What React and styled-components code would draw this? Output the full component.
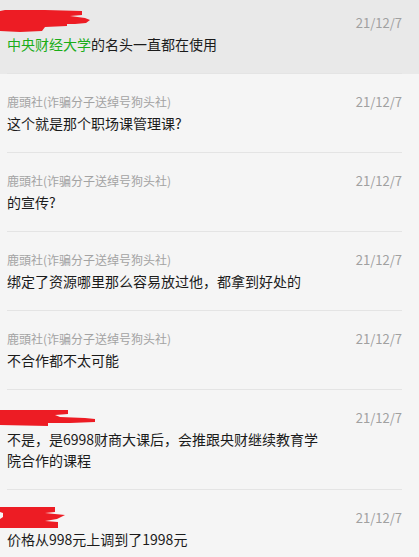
import React from "react";
import styled, { createGlobalStyle } from "styled-components";

const Global = createGlobalStyle`
  html, body {
    margin: 0;
    padding: 0;
    background: #f5f5f5;
    overflow: hidden;
  }
  body {
    font-family: "Noto Sans CJK SC", "Noto Sans", sans-serif;
  }
`;

const List = styled.div`
  display: flex;
  flex-direction: column;
  margin-top: -5px;
  width: 419px;
`;

const Item = styled.div`
  background: ${(p) => (p.$active ? "#e9e9e9" : "transparent")};
  padding: 0 17px 0 7px;
`;

const Inner = styled.div`
  padding: 18px 0 18px;
  border-bottom: 1px solid #e4e4e4;
  display: flex;
  flex-direction: column;
`;

const Head = styled.div`
  display: flex;
  align-items: center;
  justify-content: space-between;
  height: 20px;
`;

const Name = styled.span`
  font-size: 12px;
  color: #a3a3a3;
  line-height: 20px;
  white-space: nowrap;
`;

const DateText = styled.span`
  font-size: 13px;
  color: #a0a0a0;
  line-height: 20px;
`;

const Message = styled.div`
  margin-top: 1px;
  font-size: 14px;
  line-height: 21px;
  color: #1b1b1b;
  max-width: 322px;
`;

const Green = styled.span`
  color: #1aad19;
`;

const Scribble = styled.svg`
  display: block;
  width: 100px;
  height: 28px;
  margin: -4px 0 -4px -7px;
  flex-shrink: 0;
`;

const Redaction = ({ points }) => (
  <Scribble viewBox="0 0 100 28">
    <polygon points={points} fill="#ed1c24" />
  </Scribble>
);

const R1 =
  "0,2 5,1 45,1 82,2 82,6 70,7 85,9 90,11 86,14 75,15 67,15 67,17 45,18 42,22 20,23 0,22";
const R6 =
  "0,6 68,6 68,10 55,11 60,13 85,14 95,15 95,18 70,19 48,19 48,22 0,21";
const R7 =
  "0,3 55,3 55,8 45,9 65,11 57,15 45,17 58,18 58,24 0,24 0,15 3,13 3,9 0,8";

const NICK = "鹿頭社(诈骗分子送绰号狗头社)";

const items = [
  {
    active: true,
    red: R1,
    date: "21/12/7",
    msg: (
      <>
        <Green>中央财经大学</Green>的名头一直都在使用
      </>
    ),
  },
  { name: NICK, date: "21/12/7", msg: "这个就是那个职场课管理课?" },
  { name: NICK, date: "21/12/7", msg: "的宣传?" },
  { name: NICK, date: "21/12/7", msg: "绑定了资源哪里那么容易放过他，都拿到好处的" },
  { name: NICK, date: "21/12/7", msg: "不合作都不太可能" },
  {
    red: R6,
    date: "21/12/7",
    msg: "不是，是6998财商大课后，会推跟央财继续教育学院合作的课程",
  },
  { red: R7, date: "21/12/7", msg: "价格从998元上调到了1998元" },
];

export default function App() {
  return (
    <>
      <Global />
      <List>
        {items.map((it, i) => (
          <Item key={i} $active={it.active}>
            <Inner>
              <Head>
                {it.red ? <Redaction points={it.red} /> : <Name>{it.name}</Name>}
                <DateText>{it.date}</DateText>
              </Head>
              <Message>{it.msg}</Message>
            </Inner>
          </Item>
        ))}
      </List>
    </>
  );
}
